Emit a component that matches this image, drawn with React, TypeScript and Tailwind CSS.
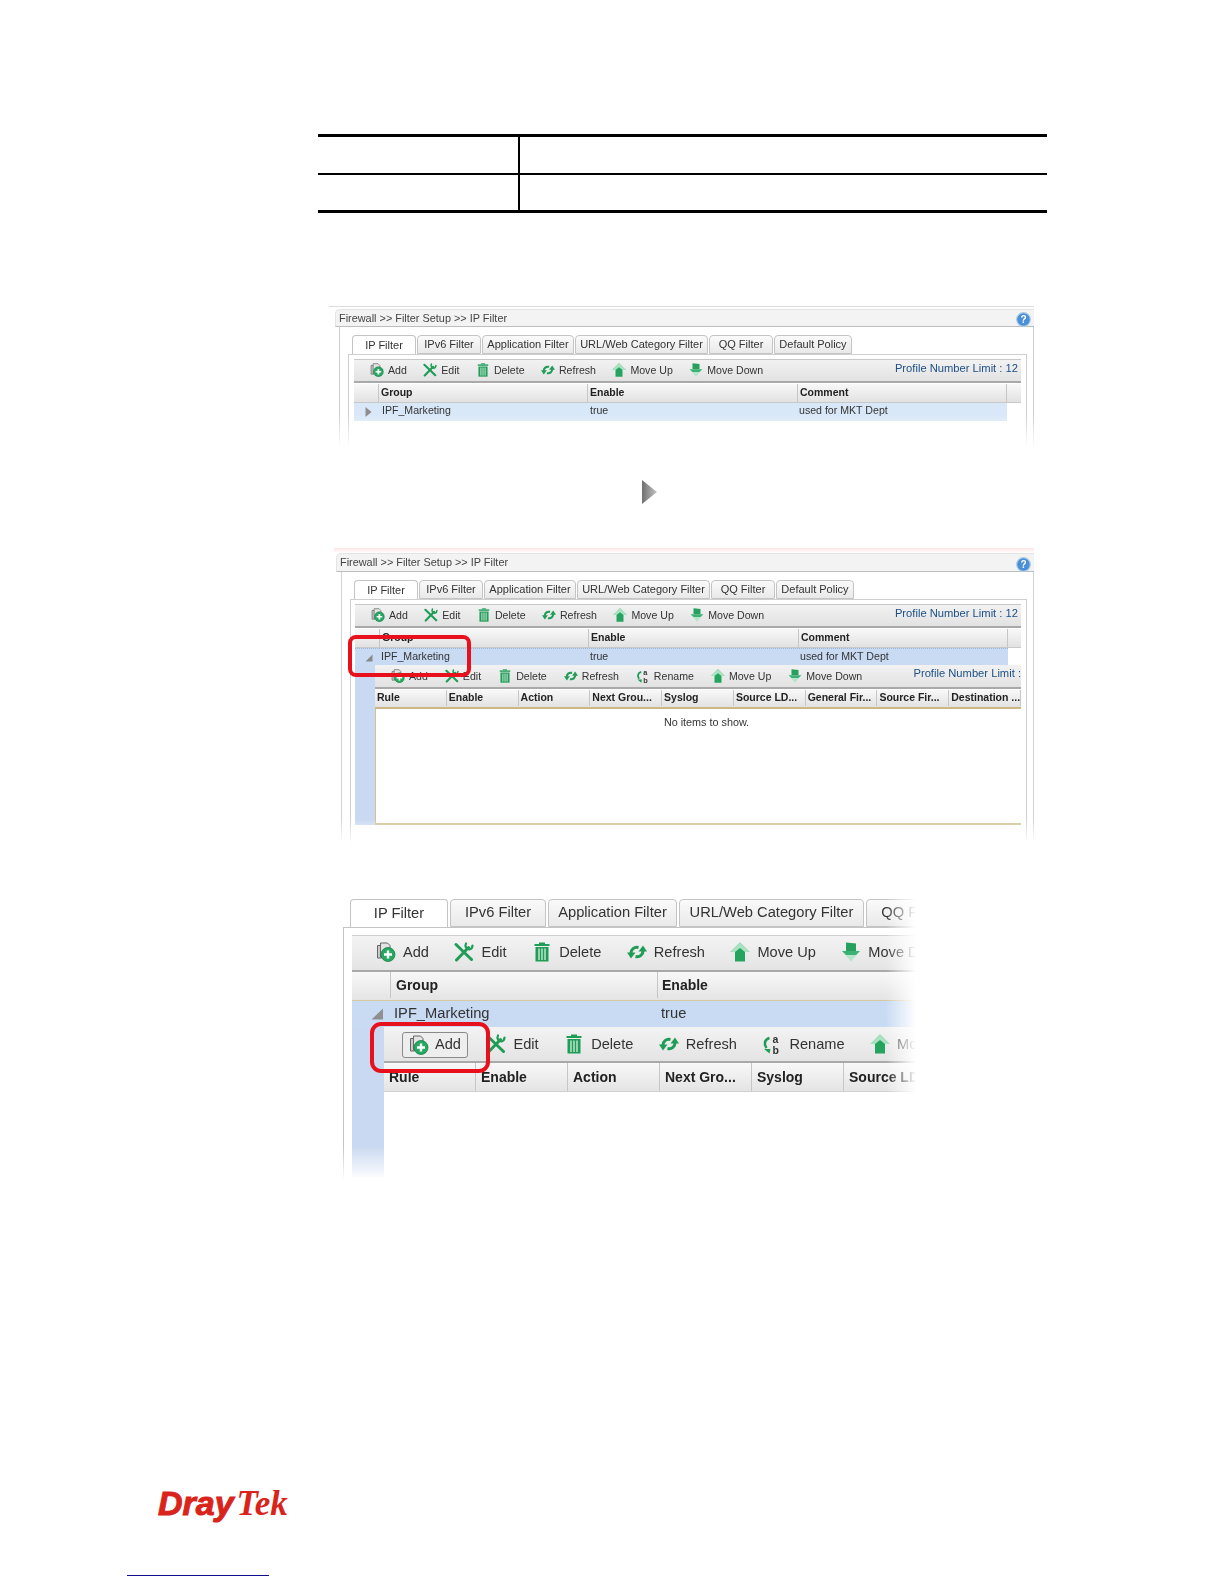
const mainTools = ["Add", "Edit", "Delete", "Refresh", "Move Up", "Move Down"];
const subTools = ["Add", "Edit", "Delete", "Refresh", "Rename", "Move Up", "Move Down"];
const subCols = ["Rule", "Enable", "Action", "Next Grou...", "Syslog", "Source LD...", "General Fir...", "Source Fir...", "Destination ..."];
const bigSubCols = ["Rule", "Enable", "Action", "Next Gro...", "Syslog", "Source LD..."];

const smallTabs = [
  { label: "IP Filter", width: "w-[64px]" },
  { label: "IPv6 Filter", width: "w-[64px]" },
  { label: "Application Filter", width: "w-[92px]" },
  { label: "URL/Web Category Filter", width: "w-[133px]" },
  { label: "QQ Filter", width: "w-[64px]" },
  { label: "Default Policy", width: "w-[78px]" },
];

const bigTabs = [
  { label: "IP Filter", width: "w-[98px]" },
  { label: "IPv6 Filter", width: "w-[96px]" },
  { label: "Application Filter", width: "w-[129px]" },
  { label: "URL/Web Category Filter", width: "w-[185px]" },
  { label: "QQ Filter", width: "w-[90px]" },
];

function ToolIcon({ name, size }: { name: string; size: number }) {
  const green = "#1f9d57";
  return (
    <svg width={size} height={size} viewBox="0 0 20 20" className="shrink-0">
      {name === "Add" && (
        <g>
          <path d="M1.500 3.500h4V16h-4z" fill="#c9c9c9" stroke="#666" strokeWidth="1" />
          <path d="M4.500 1h7l2.500 2.500V15h-9.500z" fill="#e4e4e4" stroke="#666" strokeWidth="1" />
          <circle cx="12" cy="12.500" r="7" fill="#27a862" stroke="#168048" strokeWidth="0.800" />
          <path d="M12 8.500v8M8 12.500h8" stroke="#fff" strokeWidth="2.400" />
        </g>
      )}
      {name === "Edit" && (
        <g fill="none" stroke={green} strokeLinecap="round">
          <path d="M2 2.500 17.500 17.500" strokeWidth="3" />
          <path d="M14.500 5.500 2.500 18" strokeWidth="3" />
          <path d="M12 1.500c-1.500 3 .5 6 3.500 6 1.800-.5 3-2 3-4" strokeWidth="2.200" />
        </g>
      )}
      {name === "Delete" && (
        <g fill={green}>
          <path d="M7 0.500h6V2H7z" />
          <path d="M2.500 2h15v2h-15z" />
          <path d="M3.500 5h13v14.500h-13z" />
          <path d="M7 6.500v11.500M10 6.500v11.500M13 6.500v11.500" stroke="#e6f6ec" strokeWidth="1.200" />
        </g>
      )}
      {name === "Refresh" && (
        <g>
          <path d="M11.500 5.500C7 4.500 4 7.500 4 11" fill="none" stroke={green} strokeWidth="3" />
          <path d="M8.500 14.500C13 15.500 16 12.500 16 9" fill="none" stroke={green} strokeWidth="3" />
          <path d="M0 10.500h8.500L4 16.500z" fill={green} />
          <path d="M11.500 9.500H20L16 3.500z" fill={green} />
        </g>
      )}
      {name === "Rename" && (
        <g>
          <path d="M7.500 4C2.500 5.500 1.500 10 4.500 14" fill="none" stroke={green} strokeWidth="2.600" />
          <path d="M2 15h6.500l-1 4.500z" fill={green} />
          <text x="10.500" y="9" fontSize="10.500" fontWeight="700" fill="#333" fontFamily="'Liberation Sans', sans-serif">a</text>
          <text x="10.500" y="19.500" fontSize="10.500" fontWeight="700" fill="#333" fontFamily="'Liberation Sans', sans-serif">b</text>
        </g>
      )}
      {name === "Move Up" && (
        <g>
          <path d="M10 0.500 19.500 10H15v9.500H5V10H0.500z" fill="#24a45e" />
          <path d="M10 0.500 19.500 10H15L10 6 5 10H0.500z" fill="#a9e3c2" />
        </g>
      )}
      {name === "Move Down" && (
        <g>
          <path d="M5 0.500 15 1.500V9H5z" fill="#26a05c" />
          <path d="M1 9h18l-9 10.500z" fill="#b5e4c9" />
          <path d="M1 9h18l-4 4H5z" fill="#3cb174" />
        </g>
      )}
    </svg>
  );
}

function Toolbar({ tools, big, pressed, wide }: { tools: string[]; big?: boolean; pressed?: boolean; wide?: boolean }) {
  return (
    <div className={big ? "flex items-center gap-[25.500px]" : wide ? "flex items-center gap-[17px]" : "flex items-center gap-[16.400px]"}>
      {tools.map((tool) => {
        const isPressed = pressed && tool === "Add";
        return (
          <div
            key={tool}
            className={
              isPressed
                ? "flex items-center gap-[6px] h-[26px] px-[6px] -mx-[7px] rounded-[3px] border border-[#8a8a8a] bg-[#eeeeee] text-[14.600px]"
                : big
                  ? "flex items-center gap-[7px] text-[14.600px]"
                  : "flex items-center gap-[4px] text-[10.600px]"
            }
          >
            <ToolIcon name={tool} size={big ? 20 : 14} />
            <span className="whitespace-nowrap">{tool}</span>
          </div>
        );
      })}
    </div>
  );
}

function Tabs({ tabs, big }: { tabs: { label: string; width: string }[]; big?: boolean }) {
  return (
    <div className={big ? "flex gap-[2px] h-[28px]" : "flex gap-[1px] h-[19px]"}>
      {tabs.map((tab, i) => (
        <div
          key={tab.label}
          className={`${tab.width} shrink-0 flex items-center justify-center whitespace-nowrap border border-[#c4c4c4] rounded-t-[4px] ${
            big ? "pb-[1px] text-[14.700px]" : "text-[11px]"
          } ${i === 0 ? "bg-white border-b-0" : "bg-gradient-to-b from-[#fafafa] to-[#e9e9e9]"}`}
        >
          {tab.label}
        </div>
      ))}
    </div>
  );
}

function HelpIcon() {
  return (
    <svg width="15" height="15" viewBox="0 0 15 15" className="shrink-0">
      <circle cx="7.500" cy="7.500" r="6.800" fill="#4b8fd6" stroke="#a9cbe8" strokeWidth="1.200" />
      <text x="7.500" y="11" textAnchor="middle" fontSize="10" fontWeight="700" fill="#fff" fontFamily="'Liberation Sans', sans-serif">?</text>
    </svg>
  );
}

function TitleBar({ tall }: { tall?: boolean }) {
  return (
    <div
      className={`${tall ? "h-[19px] ml-[2px]" : "h-[18px] ml-[6px]"} flex items-center justify-between pl-[3px] pr-[1px] bg-[#f3f3f3] border-l border-t border-b border-l-[#e4e4e4] border-t-[#e4e4e4] border-b-[#bdbdbd] rounded-tl-[5px] text-[10.900px] text-[#444]`}
    >
      <span className="whitespace-nowrap">Firewall &gt;&gt; Filter Setup &gt;&gt; IP Filter</span>
      <span className="mr-[2px] mt-[3px]">
        <HelpIcon />
      </span>
    </div>
  );
}

function MainHeader() {
  return (
    <div className="grid grid-cols-[25px_209px_210px_209px_1fr] h-[19px] mt-[1px] bg-gradient-to-b from-[#f8f8f8] to-[#e2e2e2] border-b border-[#c8c8c8] text-[10.500px] font-bold text-[#222]">
      <div className="border-r border-[#c6c6c6]" />
      {["Group", "Enable", "Comment"].map((label) => (
        <div key={label} className="flex items-center pl-[2px] border-r border-[#c6c6c6]">
          {label}
        </div>
      ))}
      <div />
    </div>
  );
}

function ProfileLimit({ text }: { text: string }) {
  return <span className="whitespace-nowrap self-start text-[11.200px] text-[#1c4f86]">{text}</span>;
}

function FirstShot() {
  return (
    <div className="relative ml-[329px] w-[705px] h-[141px] overflow-hidden blur-[0.3px] text-[#333]">
      <div className="h-[1px] mb-[2px] bg-[#dcdcdc]" />
      <TitleBar />
      <div className="ml-[10px] h-[120px] border-x border-[#cfcfcf] pt-[8px]">
        <div className="ml-[12px]">
          <Tabs tabs={smallTabs} />
        </div>
        <div className="ml-[8px] mr-[6px] h-[100px] border border-[#cfcfcf] pl-[5px] pr-[5px] pt-[4px]">
          <div className="flex justify-between items-center h-[24px] pl-[16px] pr-[3px] bg-gradient-to-b from-[#f2f2f2] to-[#e2e2e2] border-t border-b-2 border-t-[#c8c8c8] border-b-[#a9a9a9]">
            <Toolbar tools={mainTools} />
            <ProfileLimit text="Profile Number Limit : 12" />
          </div>
          <MainHeader />
          <div className="grid grid-cols-[25px_209px_210px_209px] items-center h-[18px] w-[653px] pb-[2px] bg-[#d9e8f8] text-[10.600px]">
            <div className="flex justify-center pl-[4px] pt-[2px]">
              <svg width="7" height="10" viewBox="0 0 7 10">
                <path d="M0.500 0 6.500 5 0.500 10z" fill="#8d8d8d" />
              </svg>
            </div>
            <div className="pl-[3px]">IPF_Marketing</div>
            <div className="pl-[2px]">true</div>
            <div className="pl-[1px]">used for MKT Dept</div>
          </div>
        </div>
      </div>
      <div className="absolute inset-x-0 bottom-0 h-[32px] bg-gradient-to-t from-white to-transparent" />
    </div>
  );
}

function SecondShot() {
  return (
    <div className="relative ml-[334px] w-[700px] h-[295px] overflow-hidden blur-[0.3px] text-[#333]">
      <div className="h-[5px] bg-gradient-to-b from-[#fbe3e3] to-white" />
      <TitleBar tall />
      <div className="ml-[7px] h-[271px] border-x border-[#d4d4d4] pt-[8px]">
        <div className="ml-[12px]">
          <Tabs tabs={smallTabs} />
        </div>
        <div className="ml-[8px] mr-[6px] h-[250px] border border-[#cfcfcf] pl-[4px] pr-[5px] pt-[4px]">
          <div className="flex justify-between items-center h-[24px] pl-[16px] pr-[3px] bg-gradient-to-b from-[#f2f2f2] to-[#e2e2e2] border-t border-b-2 border-t-[#c8c8c8] border-b-[#a9a9a9]">
            <Toolbar tools={mainTools} />
            <ProfileLimit text="Profile Number Limit : 12" />
          </div>
          <MainHeader />
          <div className="grid grid-cols-[25px_209px_210px_209px] items-center h-[17px] w-[653px] pb-[2px] bg-[#c9dbf3] border-t border-dotted border-[#9db5d4] text-[10.600px]">
            <div className="flex justify-end pr-[7px] pt-[3px]">
              <svg width="8" height="8" viewBox="0 0 8 8">
                <path d="M7.500 0.500V7.500H0.500z" fill="#8a8a8a" />
              </svg>
            </div>
            <div className="pl-[1px]">IPF_Marketing</div>
            <div className="pl-[1px]">true</div>
            <div className="pl-[1px]">used for MKT Dept</div>
          </div>
          <div className="flex">
            <div className="w-[20px] h-[160px] shrink-0 bg-[#c9d9f1]" />
            <div className="flex-1 min-w-0 overflow-hidden">
              <div className="flex justify-between items-center h-[24px] pl-[16px] bg-gradient-to-b from-[#f2f2f2] to-[#e2e2e2] border-b-2 border-[#a9a9a9]">
                <div className="pt-[1px]">
                  <Toolbar tools={subTools} wide />
                </div>
                <ProfileLimit text="Profile Number Limit :" />
              </div>
              <div className="grid grid-cols-9 h-[19px] mt-[1px] pb-[1px] bg-gradient-to-b from-[#f8f8f8] to-[#e2e2e2] border-b-2 border-[#cdb683] text-[10.500px] font-bold text-[#222]">
                {subCols.map((col) => (
                  <div key={col} className="flex items-center pl-[2px] whitespace-nowrap overflow-hidden border-r border-[#c6c6c6]">
                    {col}
                  </div>
                ))}
              </div>
              <div className="h-[116px] pt-[5px] pl-[16px] border-l border-b-2 border-[#d3c190] bg-white text-center text-[10.800px]">
                No items to show.
              </div>
            </div>
          </div>
        </div>
      </div>
      <div className="absolute inset-x-0 bottom-0 h-[24px] bg-gradient-to-t from-white to-transparent" />
      <div className="absolute left-[14px] top-[87px] w-[123px] h-[42px] rounded-[8px] border-4 border-[#e8101c]" />
    </div>
  );
}

function ThirdShot() {
  return (
    <div className="relative ml-[343px] w-[573px] h-[281px] overflow-hidden blur-[0.3px] text-[#333]">
      <div className="ml-[7px]">
        <Tabs tabs={bigTabs} big />
      </div>
      <div className="w-[720px] h-[253px] border-l border-t border-[#c4c4c4] pl-[8px] pt-[7px]">
        <div className="flex items-center h-[37px] pl-[24px] pb-[1px] bg-gradient-to-b from-[#f3f3f3] to-[#e4e4e4] border-t border-b-2 border-t-[#d0d0d0] border-b-[#a9a9a9]">
          <Toolbar tools={mainTools} big />
        </div>
        <div className="grid grid-cols-[39px_267px_1fr] h-[29px] pb-[2px] bg-gradient-to-b from-[#f8f8f8] to-[#e4e4e4] border-b border-[#d8c8a0] text-[14px] font-bold text-[#222]">
          <div className="border-r border-[#c6c6c6]" />
          <div className="flex items-center pl-[5px] border-r border-[#c6c6c6]">Group</div>
          <div className="flex items-center pl-[4px]">Enable</div>
        </div>
        <div className="grid grid-cols-[39px_267px_1fr] items-center h-[26px] pb-[2px] bg-[#c9dbf3] text-[14.700px]">
          <div className="flex justify-end pr-[7px] pt-[2px]">
            <svg width="13" height="12" viewBox="0 0 13 12">
              <path d="M12 0.500V11.500H0.500z" fill="#8f8f8f" />
            </svg>
          </div>
          <div className="pl-[3px]">IPF_Marketing</div>
          <div className="pl-[3px]">true</div>
        </div>
        <div className="flex">
          <div className="w-[32px] h-[150px] shrink-0 bg-[#c9d9f1]" />
          <div className="flex-1 min-w-0">
            <div className="flex items-center h-[36px] pl-[25px] pt-[1px] bg-gradient-to-b from-[#f3f3f3] to-[#e4e4e4] border-b-2 border-[#a9a9a9]">
              <Toolbar tools={subTools} big pressed />
            </div>
            <div className="grid grid-cols-[repeat(6,92px)] h-[29px] bg-gradient-to-b from-[#f8f8f8] to-[#e4e4e4] border-b border-[#d0d0d0] text-[14px] font-bold text-[#222]">
              {bigSubCols.map((col) => (
                <div key={col} className="flex items-center pl-[5px] whitespace-nowrap overflow-hidden border-r border-[#c6c6c6]">
                  {col}
                </div>
              ))}
            </div>
          </div>
        </div>
      </div>
      <div className="absolute inset-x-0 bottom-0 h-[34px] bg-gradient-to-t from-white to-transparent" />
      <div className="absolute right-0 inset-y-0 w-[30px] bg-gradient-to-l from-white to-transparent" />
      <div className="absolute left-[27px] top-[123px] w-[120px] h-[51px] rounded-[11px] border-4 border-[#e8101c]" />
    </div>
  );
}

export default function App() {
  return (
    <div className="w-[1224px] h-[1584px] overflow-hidden bg-white font-['Liberation_Sans',Arial,sans-serif]">
      {/* EMPTY SPEC TABLE */}
      <div className="ml-[318px] mt-[134px] w-[729px] grid grid-cols-[202px_1fr] border-t-[3px] border-b-[3px] border-black">
        <div className="h-[36px] border-r-2 border-b-2 border-black box-content" />
        <div className="h-[36px] border-b-2 border-black box-content" />
        <div className="h-[35px] border-r-2 border-black" />
        <div className="h-[35px]" />
      </div>

      <div className="mt-[93px]">
        <FirstShot />
      </div>

      {/* EXPAND ARROW */}
      <div className="ml-[642px] mt-[33px] h-[24px]">
        <svg width="15" height="24" viewBox="0 0 15 24">
          <defs>
            <linearGradient id="arrowFill" x1="0" y1="0" x2="1" y2="0">
              <stop offset="0" stopColor="#6f6f6f" />
              <stop offset="1" stopColor="#c4c4c4" />
            </linearGradient>
          </defs>
          <path d="M0 0 15 12 0 24z" fill="url(#arrowFill)" />
        </svg>
      </div>

      <div className="mt-[44px]">
        <SecondShot />
      </div>

      <div className="mt-[56px]">
        <ThirdShot />
      </div>

      {/* LOGO */}
      <div className="ml-[158px] mt-[306px] h-[38px] flex items-start text-[#d9241b] leading-none">
        <span className="text-[34px] font-bold italic [-webkit-text-stroke:1px_#d9241b]">Dray</span>
        <span className="ml-[3px] text-[35px] font-bold italic font-['Liberation_Serif',serif]">Tek</span>
      </div>

      <div className="ml-[127px] mt-[51px] w-[142px] h-[1px] bg-[#10108a]" />
    </div>
  );
}
